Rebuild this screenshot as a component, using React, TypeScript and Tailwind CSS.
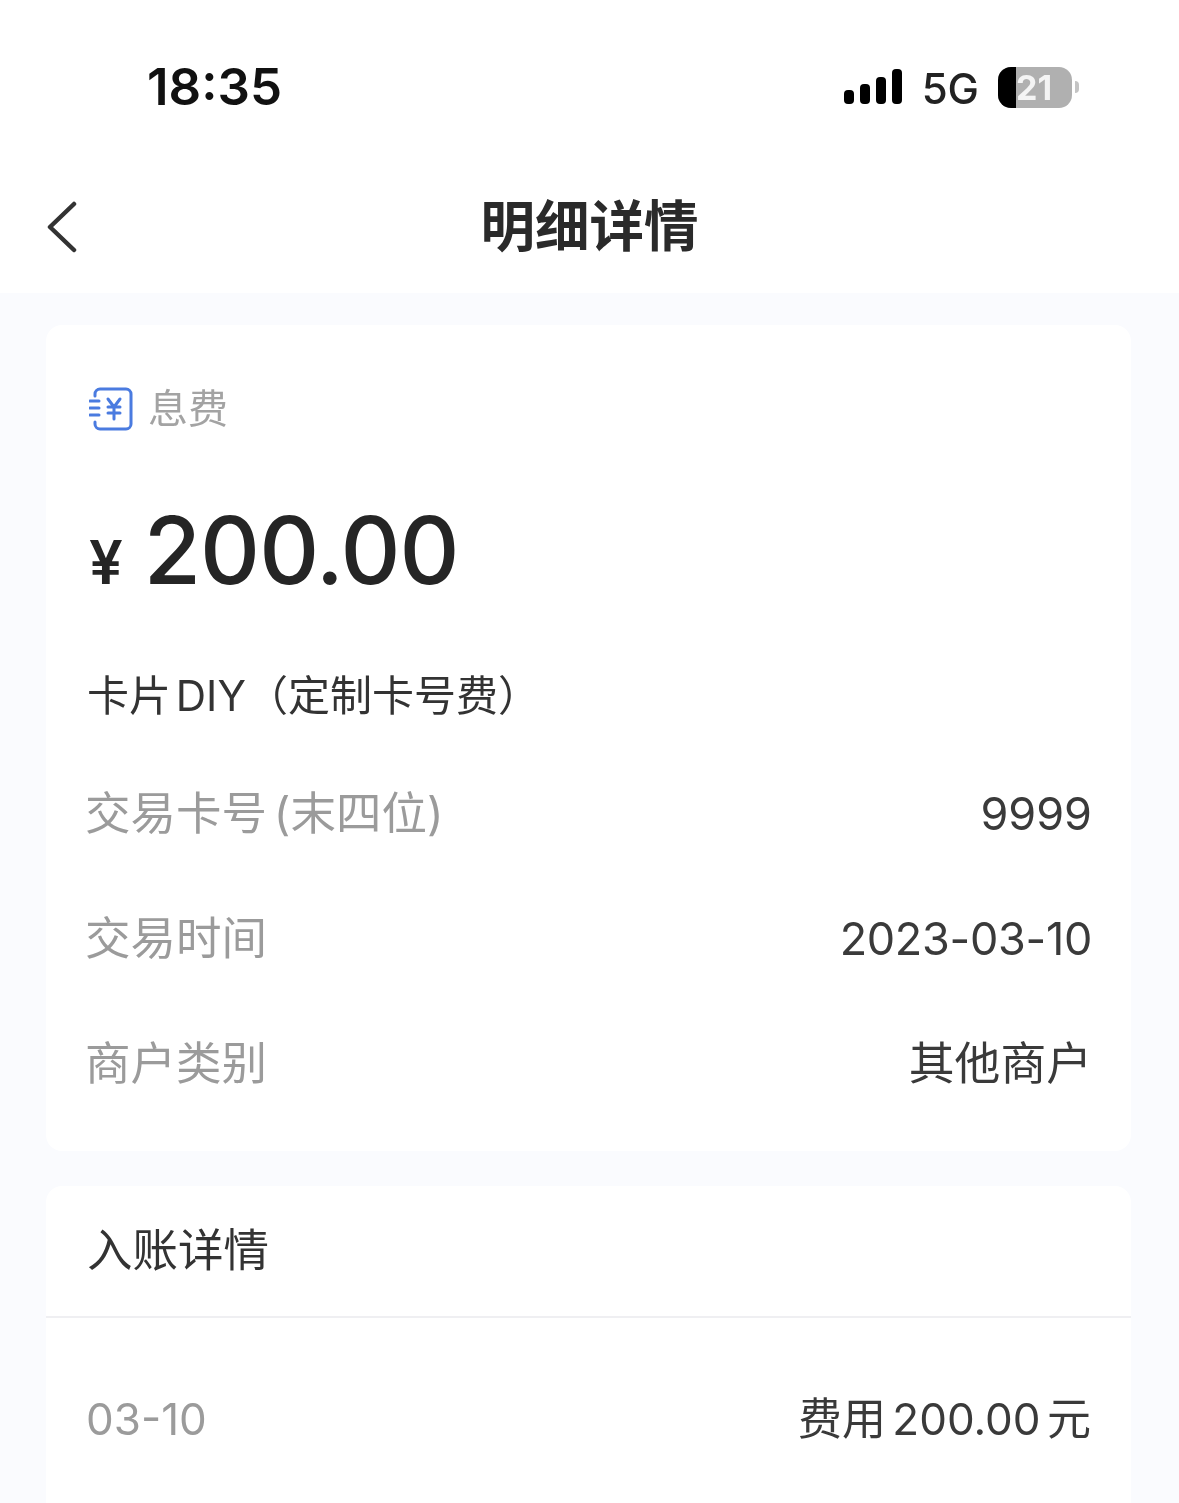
const font = "font-['Inter','Noto_Sans_CJK_SC',sans-serif]";

function Signal() {
    return (
        <svg width="60" height="38" viewBox="0 0 60 38" fill="#000">
            <rect x="1" y="22" width="10" height="14" rx="4" />
            <rect x="17" y="16" width="10" height="20" rx="4" />
            <rect x="33" y="9" width="10" height="27" rx="4" />
            <rect x="49" y="1" width="10" height="35" rx="4" />
        </svg>
    );
}

function Battery() {
    return (
        <div className="flex items-center gap-[3px]">
            <div className="relative flex h-[41px] w-[74px] overflow-hidden rounded-[13px] bg-[#b0b0b0]">
                <div className="w-[18px] bg-black" />
                <span className="absolute left-[18px] top-0 text-[34px] leading-[41px] font-bold text-[#f4f4f4]">21</span>
            </div>
            <div className="h-[12px] w-[4px] rounded-r-full bg-[#c4c4c4]" />
        </div>
    );
}

function BackIcon() {
    return (
        <svg className="absolute left-[46px] top-[27px]" width="32" height="52" viewBox="0 0 32 52" fill="none" stroke="#333" strokeWidth="4.5" strokeLinecap="round" strokeLinejoin="round">
            <path d="M28 3L4 26l24 23" />
        </svg>
    );
}

function MoneyIcon() {
    return (
        <svg width="44" height="44" viewBox="0 0 44 44" fill="none" stroke="#4a7be0" strokeWidth="3" strokeLinecap="round" strokeLinejoin="round">
            <path d="M6 9V7a5 5 0 0 1 5-5h26a5 5 0 0 1 5 5v30a5 5 0 0 1-5 5H11a5 5 0 0 1-5-5v-2" />
            <path d="M1 14h9M1 21h9M1 28h9" />
            <path d="M19 12l6 8 6-8M25 20v12M19 20h12M19 26h12" />
        </svg>
    );
}

interface RowProps {
    label: string;
    value: string;
    labelClass: string;
    valueClass: string;
}

function Row({ label, value, labelClass, valueClass }: RowProps) {
    return (
        <div className="flex items-center justify-between">
            <span className={`text-[#9b9b9b] ${labelClass}`}>{label}</span>
            <span className={`text-[#3a3a3a] ${valueClass}`}>{value}</span>
        </div>
    );
}

export default function App() {
    return (
        <div className={`flex h-[1503px] flex-col overflow-hidden bg-[#fafbfe] blur-[0.7px] ${font}`}>
            <div className="h-[293px] shrink-0 bg-white">
                <div className="flex h-[174px] items-center justify-between pl-[147px] pr-[100px]">
                    <span className="text-[51px] font-semibold text-[#111]">18:35</span>
                    <div className="flex items-center gap-[19px]">
                        <Signal />
                        <span className="mt-[3px] text-[42px] font-medium text-[#222]">5G</span>
                        <Battery />
                    </div>
                </div>
                <div className="relative flex h-[104px] items-center justify-center">
                    <BackIcon />
                    <span className="mt-[1px] text-[54.5px] font-bold text-[#2a2a2a]">明细详情</span>
                </div>
            </div>

            <div className="ml-[46px] mr-[48px] mt-[32px] flex h-[826px] flex-col rounded-[16px] bg-white pl-[41px] pr-[39px]">
                <div className="ml-[2px] mt-[62px] flex items-center gap-[15px]">
                    <MoneyIcon />
                    <span className="text-[40px] leading-[44px] text-[#a3a3a3]">息费</span>
                </div>
                <div className="ml-[2px] mt-[69px] flex items-baseline gap-[21px] text-[#252525]">
                    <span className="text-[60px] leading-none font-semibold">¥</span>
                    <span className="text-[93px] leading-[100px] font-medium tracking-[-1px]">200.00</span>
                </div>
                <div className="mt-[64px] text-[42px] text-[#333] [word-spacing:-7px]">卡片 DIY（定制卡号费）</div>
                <div className="-ml-[2px] mt-[57px] flex flex-col gap-[66px] text-[45px] leading-[59px]">
                    <Row label="交易卡号 (末四位)" value="9999" labelClass="text-[45.5px] [word-spacing:-6px]" valueClass="" />
                    <Row label="交易时间" value="2023-03-10" labelClass="text-[45.5px]" valueClass="tracking-[-0.3px]" />
                    <Row label="商户类别" value="其他商户" labelClass="text-[45.5px]" valueClass="text-[45.8px]" />
                </div>
            </div>

            <div className="ml-[46px] mr-[48px] mt-[35px] flex-1 rounded-t-[16px] bg-white">
                <div className="flex h-[132px] items-center border-b-2 border-[#efeff2] pl-[41px] text-[45.5px] text-[#333]">入账详情</div>
                <div className="mt-[68px] pl-[40px] pr-[40px] text-[44px] [word-spacing:-6px]">
                    <Row label="03-10" value="费用 200.00 元" labelClass="" valueClass="" />
                </div>
            </div>
        </div>
    );
}
